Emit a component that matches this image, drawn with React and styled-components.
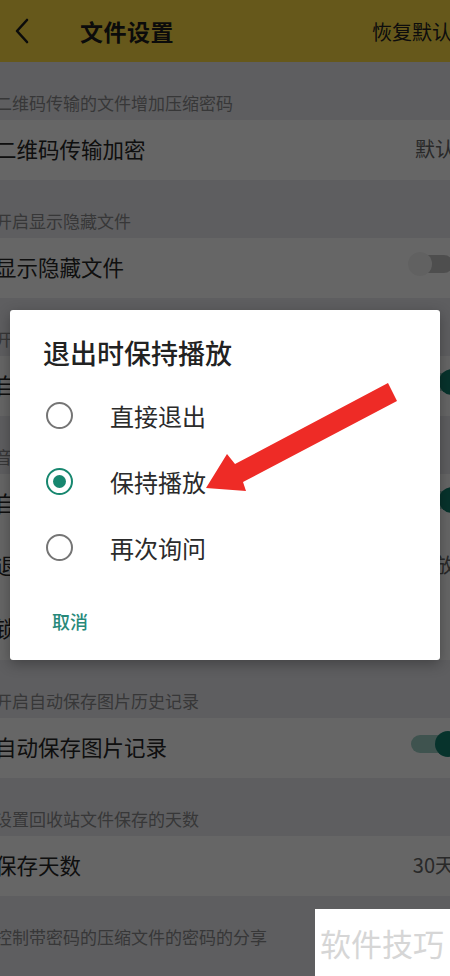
import React from 'react'
import styled, { createGlobalStyle } from 'styled-components'

const cjk = `"Noto Sans CJK SC", "Noto Sans", sans-serif`
const teal = '#17876f'

const GlobalStyle = createGlobalStyle`
	html, body {
		margin: 0;
		padding: 0;
		width: 450px;
		height: 976px;
		overflow: hidden;
		background: #ececf0;
		font-family: ${cjk};
	}
`

const Screen = styled.div`
	position: relative;
	width: 450px;
	height: 976px;
	overflow: hidden;
	background: #ececf0;
`

const Header = styled.header`
	display: flex;
	align-items: center;
	width: 452px;
	height: 62px;
	padding-left: 14px;
	box-sizing: border-box;
	background: #ffdc44;
`

const BackButton = styled.span`
	display: flex;
	width: 66px;
`

const Title = styled.h1`
	flex: 1;
	margin: 0;
	font-size: 23px;
	font-weight: 700;
	color: #1c1c1c;
	letter-spacing: 0.5px;
`

const HeaderAction = styled.span`
	flex-shrink: 0;
	font-size: 20px;
	color: #222;
	white-space: nowrap;
`

const List = styled.div`
	display: flex;
	flex-direction: column;
	width: 477px;
	margin-left: -5px;
`

const Section = styled.div`
	display: flex;
	align-items: flex-end;
	height: ${({ h }) => h || 58}px;
	padding-bottom: 5px;
	box-sizing: border-box;
	font-size: 17px;
	color: #8a8a8c;
	white-space: nowrap;
`

const Row = styled.div`
	display: flex;
	align-items: center;
	height: ${({ h }) => h || 60}px;
	padding-right: 17px;
	padding-bottom: 3px;
	box-sizing: border-box;
	background: #fff;
	font-size: 21.5px;
	color: #262626;
	white-space: nowrap;
`

const RowLabel = styled.span`
	flex: 1;
`

const RowValue = styled.span`
	font-size: 20px;
	color: #666;
`

const Scrim = styled.div`
	position: absolute;
	inset: 0;
	display: flex;
	align-items: center;
	justify-content: center;
	background: rgba(0, 0, 0, 0.6);
`

const Dialog = styled.div`
	display: flex;
	flex-direction: column;
	width: 430px;
	margin-top: -7px;
	padding: 27px 33px 27px;
	box-sizing: border-box;
	background: #fff;
	border-radius: 3px;
	box-shadow: 0 4px 14px rgba(0, 0, 0, 0.3);
`

const DialogTitle = styled.h2`
	margin: 0 0 14px;
	font-size: 27px;
	line-height: 32px;
	font-weight: 500;
	color: #222;
`

const Option = styled.label`
	display: flex;
	align-items: center;
	height: 66px;
	padding-left: 3px;
	gap: 37px;
	font-size: 24px;
	color: #2b2b2b;
`

const Radio = styled.span`
	display: flex;
	align-items: center;
	justify-content: center;
	width: 27px;
	height: 27px;
	box-sizing: border-box;
	border-radius: 50%;
	border: 2.5px solid ${({ checked }) => (checked ? teal : '#757575')};

	&::after {
		content: '';
		width: 13px;
		height: 13px;
		border-radius: 50%;
		background: ${teal};
		display: ${({ checked }) => (checked ? 'block' : 'none')};
	}
`

const CancelButton = styled.button`
	align-self: flex-start;
	margin: 28px 0 0 9px;
	padding: 0;
	border: 0;
	background: none;
	font-family: ${cjk};
	font-size: 18px;
	line-height: 24px;
	font-weight: 500;
	color: #27897a;
`

const Annotation = styled.svg`
	position: absolute;
	top: 0;
	left: 0;
	pointer-events: none;
`

const Watermark = styled.div`
	position: absolute;
	right: 0;
	bottom: 0;
	display: flex;
	align-items: center;
	width: 135px;
	height: 67px;
	padding-left: 5px;
	box-sizing: border-box;
	background: #fff;
	font-size: 31px;
	color: #d6d6d6;
	white-space: nowrap;
`

const Switch = ({ on }) => (
	<svg width="50" height="28" viewBox="0 0 50 28">
		{on ? (
			<>
				<rect x="0" y="5" width="40" height="18" rx="9" fill="#9fcfc6" />
				<circle cx="37" cy="14" r="13" fill="#127f6f" />
			</>
		) : (
			<>
				<rect x="8" y="5" width="38" height="18" rx="9" fill="#c4c4c4" />
				<circle cx="13" cy="14" r="12" fill="#f3f3f3" />
			</>
		)}
	</svg>
)

const settings = [
	{ section: '二维码传输的文件增加压缩密码', label: '二维码传输加密', value: '默认' },
	{ section: '开启显示隐藏文件', label: '显示隐藏文件', toggle: false },
	{ section: '开启自动清理缓存文件', label: '自动清理缓存', toggle: true, sw: 8 },
	{ section: '音频文件自动播放设置', label: '自动播放下一个', toggle: true, sw: 8 },
	{ label: '退出时保持播放', value: '保持播放', h: 63 },
	{ label: '锁屏时继续播放', h: 63 },
	{ section: '开启自动保存图片历史记录', label: '自动保存图片记录', toggle: true, sw: 4, sh: 58 },
	{ section: '设置回收站文件保存的天数', label: '保存天数', value: '30天' },
	{ section: '控制带密码的压缩文件的密码的分享' },
]

const options = ['直接退出', '保持播放', '再次询问']

export default function App() {
	return (
		<Screen>
			<GlobalStyle />
			<Header>
				<BackButton>
					<svg width="16" height="26" viewBox="0 0 16 26">
						<path d="M13 2 L3 13 L13 24" fill="none" stroke="#1c1c1c" strokeWidth="2.6" strokeLinecap="round" strokeLinejoin="round" />
					</svg>
				</BackButton>
				<Title>文件设置</Title>
				<HeaderAction>恢复默认</HeaderAction>
			</Header>
			<List>
				{settings.map((s, i) => (
					<React.Fragment key={i}>
						{s.section && <Section h={s.sh}>{s.section}</Section>}
						{s.label && (
							<Row h={s.h}>
								<RowLabel>{s.label}</RowLabel>
								{s.value && <RowValue>{s.value}</RowValue>}
								{s.toggle !== undefined && (
									<span style={{ marginRight: -(s.sw || 0) - 2 }}>
										<Switch on={s.toggle} />
									</span>
								)}
							</Row>
						)}
					</React.Fragment>
				))}
			</List>
			<Scrim>
				<Dialog>
					<DialogTitle>退出时保持播放</DialogTitle>
					{options.map((o, i) => (
						<Option key={o}>
							<Radio checked={i === 1} />
							{o}
						</Option>
					))}
					<CancelButton>取消</CancelButton>
				</Dialog>
			</Scrim>
			<Annotation width="450" height="976" viewBox="0 0 450 976">
				<polygon
					points="206,488 227,454 235,464 388,383 397,401 243,482 246,491"
					fill="#ee2b26"
				/>
			</Annotation>
			<Watermark>软件技巧</Watermark>
		</Screen>
	)
}
